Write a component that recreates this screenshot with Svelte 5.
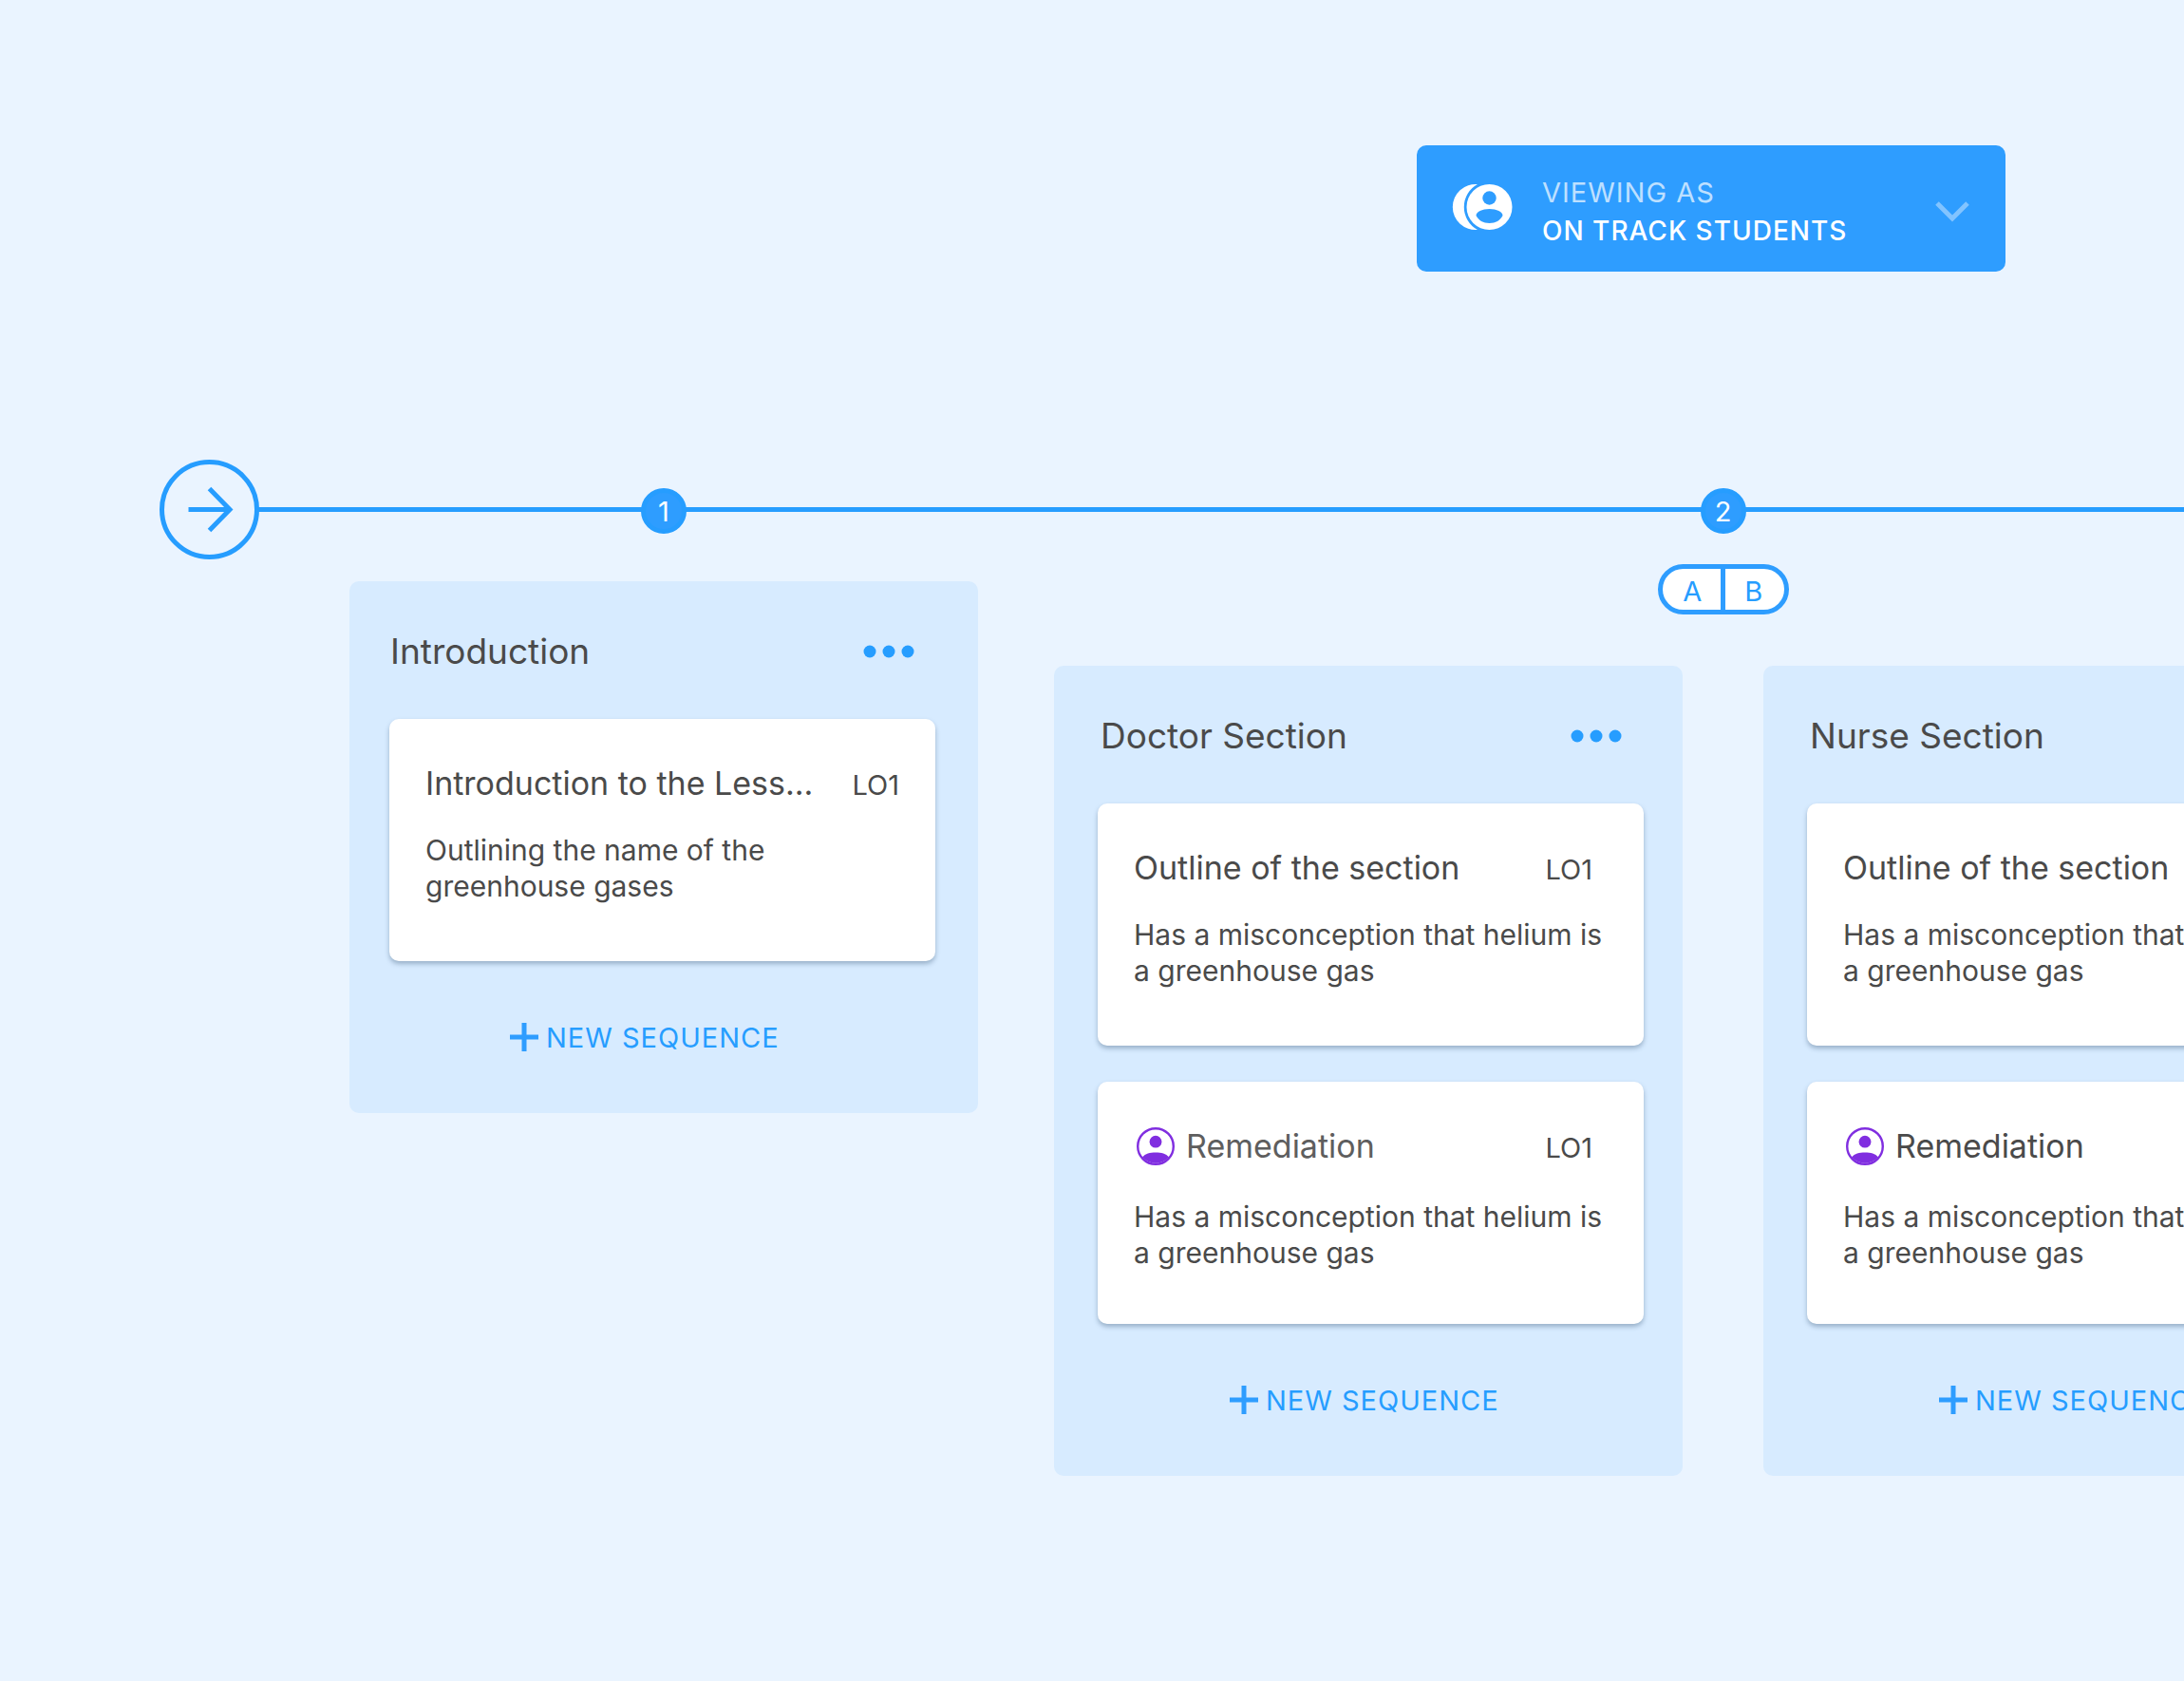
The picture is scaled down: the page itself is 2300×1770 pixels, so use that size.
<script lang="ts">
	interface Card {
		title: string;
		objective: string;
		text: string;
		remediation?: boolean;
		muted?: boolean;
	}

	interface Column {
		title: string;
		cards: Card[];
	}

	interface Stage {
		number: number;
		paths: string[];
		columns: Column[];
	}

	const misconception = 'Has a misconception that helium is a greenhouse gas';

	const stages: Stage[] = [
		{
			number: 1,
			paths: [],
			columns: [
				{
					title: 'Introduction',
					cards: [
						{
							title: 'Introduction to the Less...',
							objective: 'LO1',
							text: 'Outlining the name of the greenhouse gases'
						}
					]
				}
			]
		},
		{
			number: 2,
			paths: ['A', 'B'],
			columns: [
				{
					title: 'Doctor Section',
					cards: [
						{ title: 'Outline of the section', objective: 'LO1', text: misconception },
						{
							title: 'Remediation',
							objective: 'LO1',
							text: misconception,
							remediation: true,
							muted: true
						}
					]
				},
				{
					title: 'Nurse Section',
					cards: [
						{ title: 'Outline of the section', objective: 'LO1', text: misconception },
						{ title: 'Remediation', objective: 'LO1', text: misconception, remediation: true }
					]
				}
			]
		}
	];

	let audience = $state('On track students');
</script>

<main class="page">
	<header class="toolbar">
		<div class="viewer">
			<svg class="viewer-icon" viewBox="0 0 64 50" aria-hidden="true">
				<path d="M27 1.100A24 24 0 1 0 27 48.900A27.200 27.200 0 0 1 27 1.100Z" fill="#fff" />
				<circle cx="39.500" cy="25" r="24" fill="#fff" />
				<circle cx="39.500" cy="15.500" r="7.200" fill="#2e9dff" />
				<path d="M25.500 34C25.500 30 32 27 39.500 27S53.500 30 53.500 34C51 39 46 42 39.500 42S28 39 25.500 34Z" fill="#2e9dff" />
			</svg>
			<div class="viewer-text">
				<label for="audience">Viewing as</label>
				<select id="audience" bind:value={audience}>
					<option>On track students</option>
				</select>
			</div>
			<svg class="chevron" viewBox="0 0 36 22" aria-hidden="true">
				<path d="M2 2L18 18L34 2" />
			</svg>
		</div>
	</header>

	<div class="track">
		<svg class="start" viewBox="0 0 105 105" aria-hidden="true">
			<circle cx="52.500" cy="52.500" r="50" />
			<path d="M30.500 52.500H74M52.500 30.500L74 52.500L52.500 74.500" />
		</svg>

		{#each stages as stage}
			<section class="stage" class:branched={stage.paths.length > 0}>
				<div class="marker">
					<span class="number">{stage.number}</span>
				</div>
				{#if stage.paths.length}
					<div class="paths">
						{#each stage.paths as path}
							<button type="button">{path}</button>
						{/each}
					</div>
				{/if}
				<div class="columns">
					{#each stage.columns as column}
						<article class="column">
							<div class="column-head">
								<h2>{column.title}</h2>
								<button type="button" class="more" aria-label="More options">
									<svg viewBox="0 0 54 14" aria-hidden="true">
										<circle cx="7" cy="7" r="6.500" />
										<circle cx="27" cy="7" r="6.500" />
										<circle cx="47" cy="7" r="6.500" />
									</svg>
								</button>
							</div>
							<div class="cards">
								{#each column.cards as card}
									<div class="card" class:remediation={card.remediation}>
										<div class="card-head">
											{#if card.remediation}
												<svg class="avatar" viewBox="0 0 40 40" aria-hidden="true">
													<circle cx="20" cy="20" r="18.800" fill="none" stroke="#802ee0" stroke-width="2.400" />
													<circle cx="20" cy="15.200" r="6.400" fill="#802ee0" />
													<path d="M6 31.500C9 27.500 14 26.500 20 26.500S31 27.500 34 31.500A18.800 18.800 0 0 1 6 31.500Z" fill="#802ee0" />
												</svg>
											{/if}
											<h3 class:muted={card.muted}>{card.title}</h3>
											<span class="objective">{card.objective}</span>
										</div>
										<p>{card.text}</p>
									</div>
								{/each}
							</div>
							<button type="button" class="add">
								<svg viewBox="0 0 30 30" aria-hidden="true">
									<path d="M15 0V30M0 15H30" />
								</svg>
								New sequence
							</button>
						</article>
					{/each}
				</div>
			</section>
		{/each}
	</div>
</main>

<style>
	:global(body) {
		background: #eaf4ff;
	}

	.page {
		--blue: #269dff;
		--blue-fill: #2e9dff;
		--text: #4a4a4a;
		box-sizing: border-box;
		min-height: 100vh;
		padding: 153px 0 120px;
		overflow: hidden;
		background: #eaf4ff;
		color: var(--text);
		font-family: Inter, 'Liberation Sans', sans-serif;
	}

	button {
		padding: 0;
		border: 0;
		background: none;
		font: inherit;
		cursor: pointer;
	}

	.toolbar {
		display: flex;
		justify-content: flex-end;
		padding-right: 188px;
		margin-bottom: 198px;
	}

	.viewer {
		display: flex;
		align-items: center;
		box-sizing: border-box;
		width: 620px;
		padding: 30px 38px 23px 37px;
		border-radius: 10px;
		background: var(--blue-fill);
		color: #fff;
	}

	.viewer-icon {
		width: 64px;
		height: 50px;
		margin: 0 31px 10px 0;
	}

	.viewer-text {
		display: flex;
		flex: 1;
		flex-direction: column;
		font-size: 29px;
		line-height: 40px;
		letter-spacing: 1px;
		text-transform: uppercase;
	}

	.viewer-text label {
		color: rgba(255, 255, 255, 0.7);
	}

	.viewer-text select {
		height: 40px;
		padding: 0;
		border: 0;
		appearance: none;
		background: none;
		color: inherit;
		font: inherit;
		font-size: 28px;
		font-weight: 500;
		letter-spacing: inherit;
		text-transform: inherit;
	}

	.chevron {
		width: 36px;
		height: 22px;
		fill: none;
		stroke: #82c4ff;
		stroke-width: 5;
	}

	.track {
		position: relative;
		display: flex;
		align-items: flex-start;
		padding-left: 168px;
	}

	/* line that joins the start circle and the stage numbers */
	.track::before {
		content: '';
		position: absolute;
		top: 50px;
		right: 0;
		left: 270px;
		height: 5px;
		background: var(--blue);
	}

	.start {
		flex: none;
		width: 105px;
		height: 105px;
		margin-right: 95px;
		fill: none;
		stroke: var(--blue);
		stroke-width: 5;
	}

	.stage {
		--heading-inset: 43px;
		--more-inset: 67px;
		--card-inset: 42px;
		--action-inset: 169px;
		--objective-inset: 0px;
		position: relative;
		display: flex;
		flex: none;
		flex-direction: column;
		align-items: center;
		margin-right: 80px;
	}

	.branched {
		--heading-inset: 49px;
		--more-inset: 64px;
		--card-inset: 46px;
		--action-inset: 185px;
		--objective-inset: 16px;
	}

	.marker {
		display: flex;
		align-items: center;
		height: 108px;
	}

	.number {
		box-sizing: border-box;
		width: 48px;
		height: 48px;
		border: 5px solid var(--blue);
		border-radius: 50%;
		background: var(--blue-fill);
		color: #fff;
		font-size: 29px;
		line-height: 40px;
		text-align: center;
	}

	.paths {
		display: flex;
		box-sizing: border-box;
		width: 138px;
		height: 53px;
		padding: 0 2px;
		margin: 2px 0 34px;
		border: 5px solid var(--blue-fill);
		border-radius: 27px;
		background: #fff;
	}

	.paths button {
		flex: 1;
		padding-top: 4px;
		color: var(--blue);
		font-size: 29px;
	}

	.paths button + button {
		border-left: 5px solid var(--blue-fill);
	}

	.columns {
		display: flex;
		align-items: flex-start;
		gap: 85px;
		margin-top: 20px;
	}

	.column {
		box-sizing: border-box;
		width: 662px;
		border-radius: 10px;
		background: #d7ebff;
	}

	.column-head {
		display: flex;
		align-items: center;
		justify-content: space-between;
		padding: 50px var(--more-inset) 47px var(--heading-inset);
	}

	h2,
	h3,
	p {
		margin: 0;
		font-weight: 400;
	}

	h2 {
		font-size: 37px;
		line-height: 48px;
	}

	.more svg {
		display: block;
		width: 54px;
		height: 14px;
		fill: var(--blue);
	}

	.cards {
		display: flex;
		flex-direction: column;
		gap: 38px;
		padding-left: var(--card-inset);
	}

	.card {
		box-sizing: border-box;
		width: 575px;
		min-height: 255px;
		padding: 46px 38px 40px;
		border-radius: 10px;
		background: #fff;
		box-shadow: 0 3px 5px rgba(60, 90, 120, 0.4);
	}

	.card-head {
		display: flex;
		align-items: baseline;
		margin-bottom: 29px;
	}

	.remediation .card-head {
		margin-bottom: 33px;
	}

	.avatar {
		align-self: center;
		width: 40px;
		height: 40px;
		margin: 0 12px 0 3px;
	}

	h3 {
		flex: 1;
		font-size: 34px;
		line-height: 44px;
		white-space: nowrap;
	}

	.muted {
		color: #5e5e5e;
	}

	.objective {
		margin-right: var(--objective-inset);
		font-size: 29px;
	}

	p {
		font-size: 30px;
		line-height: 38px;
	}

	.add {
		display: flex;
		align-items: center;
		gap: 8px;
		padding: 61px 0 59px;
		margin-left: var(--action-inset);
		color: var(--blue);
		font-size: 29px;
		line-height: 40px;
		letter-spacing: 1px;
		text-transform: uppercase;
	}

	.add svg {
		width: 30px;
		height: 30px;
		margin-bottom: 2px;
		stroke: var(--blue-fill);
		stroke-width: 5;
	}
</style>
